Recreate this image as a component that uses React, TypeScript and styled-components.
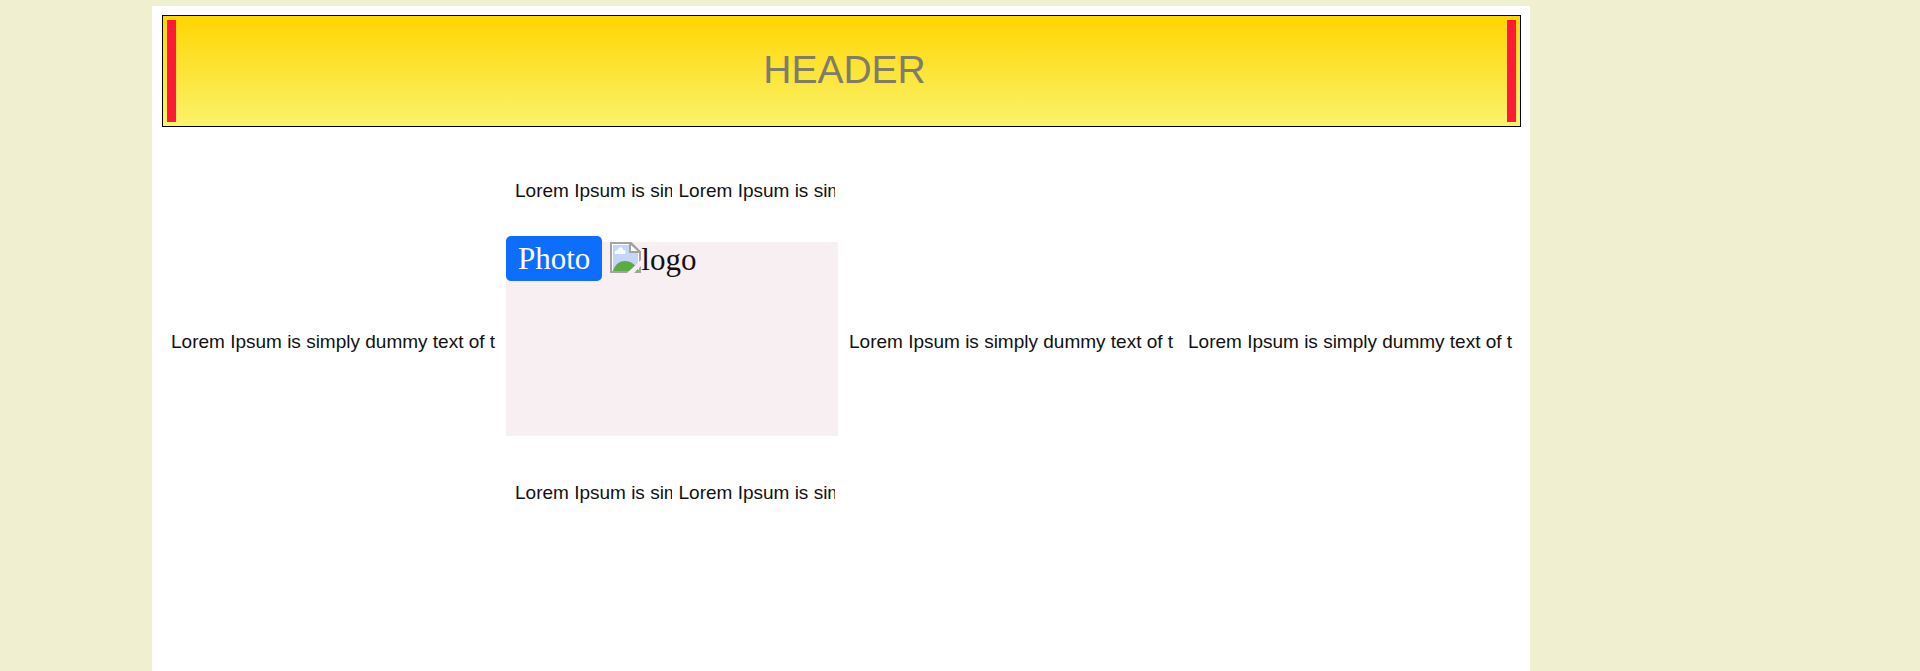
import React from "react";
import styled, { createGlobalStyle } from "styled-components";

const GlobalStyle = createGlobalStyle`
  *, *::before, *::after { box-sizing: border-box; }
  body {
    margin: 0;
    background: #f0f0d0;
    color: #111;
    font-family: "Liberation Sans", Arial, sans-serif;
  }
`;

const Page = styled.div`
  display: grid;
  grid-template-columns: 152fr 1378fr 390fr;
  min-height: 100vh;
  padding-top: 6px;
`;

const Sheet = styled.div`
  grid-column: 2;
  background: #fff;
  padding: 9px 9px 0 10px;
`;

const Header = styled.header`
  border: 1px solid #000;
  padding: 4px;
  background: linear-gradient(#ffd500, #faf36c);
`;

const Title = styled.h1`
  margin: 0;
  padding: 0 0 2px 6px;
  border: solid #ff1a3c;
  border-width: 0 9px;
  color: #7f7d68;
  font-size: 39px;
  font-weight: 400;
  line-height: 100px;
  text-align: center;
`;

const Columns = styled.main`
  display: grid;
  grid-template-columns: repeat(4, minmax(0, 1fr));
  align-items: center;
  margin: 12px -2px 0 5px;
`;

const Center = styled.div`
  padding-right: 7px;
`;

const Pair = styled.div`
  display: grid;
  grid-template-columns: repeat(2, minmax(0, 1fr));
  align-items: center;
  height: 103px;
  padding-left: 5px;
`;

const Cell = styled.div`
  min-width: 0;
  padding: 0 3px 0 4px;
`;

const Line = styled.p`
  margin: 0;
  overflow: hidden;
  white-space: nowrap;
  font-size: 19px;
  line-height: 24px;
`;

const PhotoPanel = styled.section`
  display: flex;
  align-items: flex-start;
  gap: 8px;
  height: 194px;
  margin-bottom: 5px;
  background: #f8eff2;
  font-family: "Liberation Serif", "Times New Roman", serif;
  font-size: 31px;
`;

const PhotoButton = styled.button`
  margin-top: -6px;
  padding: 1px 12px 0;
  border: 0;
  border-radius: 5px;
  background: #0d6efd;
  color: #fff;
  font: inherit;
  line-height: 44px;
  cursor: pointer;
`;

const Logo = styled.div`
  display: flex;
  line-height: 36px;
`;

function Lorem({ text }: { text: string }) {
  return (
    <Cell>
      <Line>{text}</Line>
    </Cell>
  );
}

function LoremWide() {
  return <Lorem text="Lorem Ipsum is simply dummy text of t" />;
}

function LoremPair() {
  return (
    <Pair>
      <Lorem text="Lorem Ipsum is sim" />
      <Lorem text="Lorem Ipsum is sim" />
    </Pair>
  );
}

function MissingImage() {
  return (
    <svg width="31" height="31" viewBox="0 0 31 31" aria-hidden="true">
      <path d="M1 1H21L30 10V30H1Z" fill="#fff" />
      <path d="M3 3H20V11H28V28H3Z" fill="#c3d6f5" />
      <path d="M5 12C4 9 6 8 8 8C9 4 13 5 13 8C16 8 16 10 15 12Z" fill="#fff" />
      <path d="M3 29C5 22 10 19 15 19C21 19 26 23 29 29Z" fill="#58ac40" />
      <path d="M1 1H21L30 10V30H1Z" fill="none" stroke="#a3a3a3" strokeWidth="2" />
      <path d="M20 1V10H30Z" fill="#fff" stroke="#a3a3a3" strokeWidth="2" />
      <path d="M17 31L31 18V24L24 31Z" fill="#f8eff2" />
    </svg>
  );
}

export default function App() {
  return (
    <>
      <GlobalStyle />
      <Page>
        <Sheet>
          <Header>
            <Title>HEADER</Title>
          </Header>
          <Columns>
            <LoremWide />
            <Center>
              <LoremPair />
              <PhotoPanel>
                <PhotoButton type="button">Photo</PhotoButton>
                <Logo>
                  <MissingImage />
                  <span>logo</span>
                </Logo>
              </PhotoPanel>
              <LoremPair />
            </Center>
            <LoremWide />
            <LoremWide />
          </Columns>
        </Sheet>
      </Page>
    </>
  );
}
